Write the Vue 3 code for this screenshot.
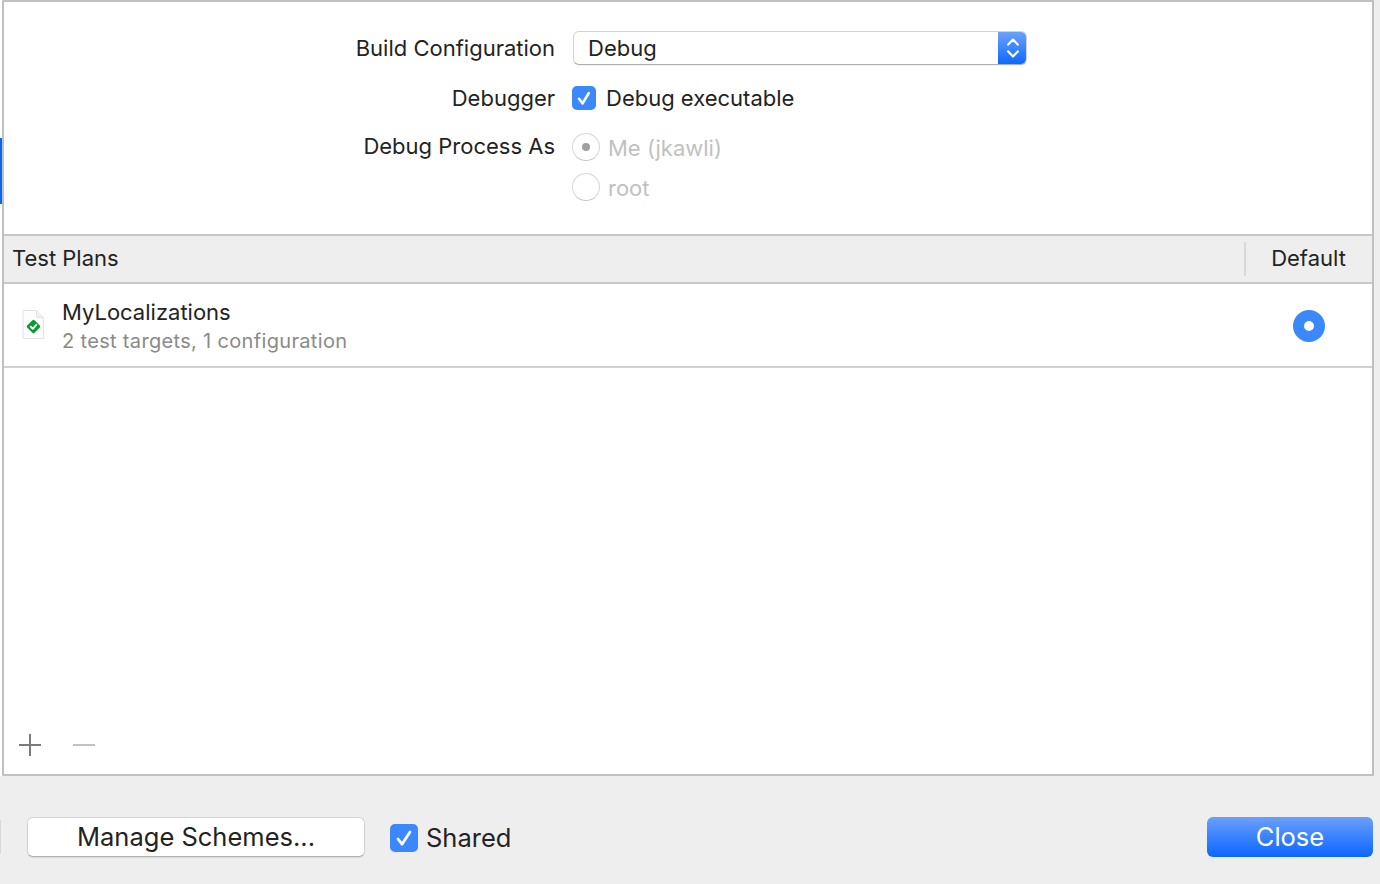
<template>
  <div class="page">
    <div class="panel">
      <span class="side-mark"></span>
      <section class="form">
        <div class="label row-select">Build Configuration</div>
        <div class="row-select">
          <div class="select">
            <span class="select-value">Debug</span>
            <span class="stepper">
              <svg width="16" height="26" viewBox="0 0 16 26" fill="none" stroke="#fff" stroke-width="2.2" stroke-linecap="round" stroke-linejoin="round">
                <path d="M3.2 9.6 8 4.6l4.8 5" />
                <path d="M3.2 16.4 8 21.4l4.8-5" />
              </svg>
            </span>
          </div>
        </div>
        <div class="label row-check">Debugger</div>
        <div class="row-check control">
          <span class="check">
            <svg width="24" height="24" viewBox="0 0 24 24" fill="none" stroke="#fff" stroke-width="2.6" stroke-linecap="round" stroke-linejoin="round"><path d="M7 12.8l3.6 4.6L16.8 7" /></svg>
          </span>
          <span>Debug executable</span>
        </div>
        <div class="label label-process">Debug Process As</div>
        <div class="radios">
          <div class="control radio-row">
            <span class="radio"><i class="radio-dot"></i></span><span class="muted">Me (jkawli)</span>
          </div>
          <div class="control radio-row">
            <span class="radio"></span><span class="muted">root</span>
          </div>
        </div>
      </section>

      <header class="table-head">
        <div class="head-title">Test Plans</div>
        <div class="head-default">Default</div>
      </header>

      <div class="plan-row">
        <svg class="file-icon" width="26" height="32" viewBox="0 0 26 32">
          <path d="M3 1.5h13.5L23.500 8.500V29.500H3z" fill="#fdfdfd" stroke="#e2e2e2" stroke-width="1" />
          <path d="M16.500 1.500v7h7" fill="#f1f1f1" stroke="#e2e2e2" stroke-width="1" />
          <rect x="8.300" y="12.300" width="10.400" height="10.400" rx="1.500" transform="rotate(45 13.500 17.500)" fill="#0a9a35" />
          <path d="M10.700 17.600l2.100 2.200 3.500-4" fill="none" stroke="#fff" stroke-width="1.800" stroke-linecap="round" stroke-linejoin="round" />
        </svg>
        <div class="plan-text">
          <div class="plan-name">MyLocalizations</div>
          <div class="plan-sub">2 test targets, 1 configuration</div>
        </div>
        <div class="plan-default"><span class="default-radio"></span></div>
      </div>

      <div class="spacer"></div>

      <div class="tools">
        <svg width="24" height="24" viewBox="0 0 24 24" stroke="#7b7b7b" stroke-width="2"><path d="M1 12h22M12 1v22" /></svg>
        <svg class="minus" width="24" height="24" viewBox="0 0 24 24" stroke="#c2c2c2" stroke-width="2"><path d="M1 12h22" /></svg>
      </div>
    </div>

    <footer class="footer">
      <span class="stub"></span>
      <button class="btn">Manage Schemes...</button>
      <div class="shared">
        <span class="check big">
          <svg width="28" height="28" viewBox="0 0 28 28" fill="none" stroke="#fff" stroke-width="2.800" stroke-linecap="round" stroke-linejoin="round"><path d="M8 15l4 5.200L20 8" /></svg>
        </span>
        <span>Shared</span>
      </div>
      <button class="btn primary">Close</button>
    </footer>
  </div>
</template>

<script setup>
</script>

<style>
html, body { margin: 0; background: #eeeeee; }
</style>

<style scoped>
.page {
  width: 1380px;
  height: 884px;
  overflow: hidden;
  display: flex;
  flex-direction: column;
  font-family: Inter, "Liberation Sans", sans-serif;
  font-size: 22px;
  color: #232323;
  background: linear-gradient(#fff, #fff) no-repeat 0 0 / 2px 776px, #eeeeee;
}
.panel {
  position: relative;
  box-sizing: border-box;
  width: 1372px;
  height: 776px;
  margin-left: 2px;
  border: 2px solid #c0c0c0;
  background: #fff;
  display: flex;
  flex-direction: column;
  flex: none;
}
.side-mark {
  position: absolute;
  left: -4px;
  top: 136px;
  width: 2px;
  height: 66px;
  background: #0a66ee;
}
.form {
  box-sizing: border-box;
  height: 232px;
  padding-top: 29px;
  display: grid;
  grid-template-columns: 551px 1fr;
  column-gap: 17px;
  grid-template-rows: 34px 24px auto;
  row-gap: 21px;
  align-content: start;
}
.label {
  text-align: right;
  line-height: 24px;
}
.row-select { align-self: center; }
.label.row-select { margin-top: -1px; }
.select {
  box-sizing: border-box;
  margin-left: 1px;
  width: 454px;
  height: 34px;
  border-radius: 6px;
  border: 1px solid #d2d2d2;
  border-bottom-color: #aeaeae;
  box-shadow: 0 1px 1px rgba(0,0,0,.06);
  display: flex;
  align-items: center;
  justify-content: space-between;
  background: #fff;
  overflow: hidden;
}
.select-value { padding-left: 14px; }
.stepper {
  width: 29px;
  height: 34px;
  margin: -1px -1px -1px 0;
  flex: none;
  display: flex;
  align-items: center;
  justify-content: center;
  background: linear-gradient(#6ea3fb, #0a68ff);
}
.control {
  display: flex;
  align-items: center;
}
.check {
  width: 24px;
  height: 24px;
  border-radius: 5px;
  background: #3b87fc;
  margin-right: 10px;
  flex: none;
  display: flex;
}
.check.big {
  width: 28px;
  height: 28px;
  border-radius: 5px;
  margin-right: 8px;
}
.label-process { margin-top: 3px; }
.radios {
  display: flex;
  flex-direction: column;
  gap: 12px;
  margin-top: 2px;
}
.radio-row { height: 28px; }
.radio {
  box-sizing: border-box;
  width: 28px;
  height: 28px;
  border-radius: 50%;
  border: 1px solid #d6d6d6;
  border-bottom-color: #c6c6c6;
  margin-right: 8px;
  display: flex;
  align-items: center;
  justify-content: center;
  background: #fff;
}
.radio-dot {
  width: 8px;
  height: 8px;
  border-radius: 50%;
  background: #a0a0a0;
}
.muted { color: #c1c1c1; padding-top: 1px; }
.table-head {
  box-sizing: border-box;
  height: 50px;
  flex: none;
  border-top: 2px solid #c8c8c8;
  border-bottom: 2px solid #c8c8c8;
  background: #eeeeee;
  display: flex;
  align-items: center;
  justify-content: space-between;
  line-height: 24px;
}
.head-title { padding-left: 8px; padding-bottom: 2px; }
.head-default {
  box-sizing: border-box;
  width: 128px;
  height: 34px;
  border-left: 2px solid #d8d8d8;
  padding-bottom: 2px;
  padding-right: 1px;
  display: flex;
  align-items: center;
  justify-content: center;
}
.plan-row {
  box-sizing: border-box;
  height: 84px;
  flex: none;
  border-bottom: 2px solid #d2d2d2;
  display: flex;
  align-items: center;
  padding-left: 16px;
}
.file-icon { flex: none; }
.plan-text {
  flex: 1;
  margin-left: 16px;
  display: flex;
  flex-direction: column;
  padding-top: 4px;
}
.plan-name { line-height: 28px; }
.plan-sub { color: #8a8a8a; font-size: 20px; line-height: 29px; margin-top: 1px; letter-spacing: 0.33px; }
.plan-default {
  width: 127px;
  display: flex;
  justify-content: center;
  padding-top: 2px;
}
.default-radio {
  box-sizing: border-box;
  width: 32px;
  height: 32px;
  border-radius: 50%;
  border: 11px solid #3b87fc;
  background: #fff;
}
.spacer { flex: 1; }
.tools {
  display: flex;
  gap: 30px;
  padding: 0 0 17px 14px;
}
.footer {
  position: relative;
  flex: 1;
  display: flex;
  align-items: flex-start;
  padding-top: 41px;
}
.stub {
  position: absolute;
  left: 0;
  top: 44px;
  width: 1px;
  height: 34px;
  background: #d8d8d8;
}
.btn {
  box-sizing: border-box;
  font: inherit;
  font-size: 25.5px;
  height: 40px;
  border-radius: 6px;
  border: 1px solid #d4d4d4;
  border-bottom-color: #b0b0b0;
  background: #fff;
  color: #232323;
  padding: 0 0 2px;
  width: 338px;
  margin-left: 27px;
  box-shadow: 0 1px 1px rgba(0,0,0,.08);
}
.primary {
  width: 166px;
  margin-left: auto;
  margin-right: 7px;
  color: #fff;
  border: 0;
  background: linear-gradient(#6b9ffb, #0a66ff);
  box-shadow: none;
}
.shared {
  display: flex;
  align-items: center;
  margin-left: 25px;
  margin-top: 7px;
  font-size: 25.5px;
  line-height: 28px;
}
</style>
